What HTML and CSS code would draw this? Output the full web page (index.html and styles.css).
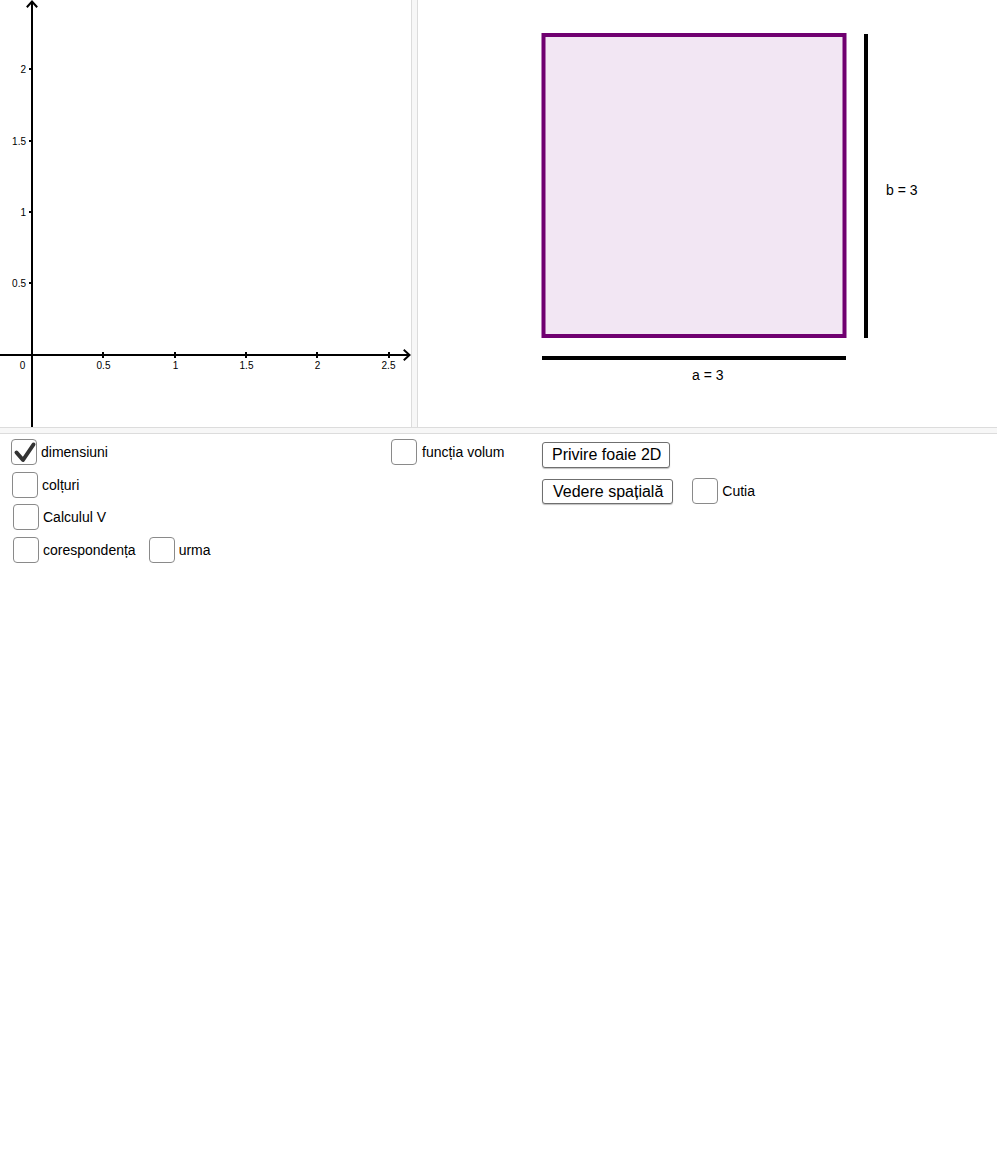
FILE: index.html
```html
<!DOCTYPE html>
<html lang="ro">
<head>
<meta charset="utf-8">
<title>Volum cutie</title>
<link rel="stylesheet" href="styles.css">
</head>
<body>
<div class="app">
  <div class="views">
    <div class="view-left">
      <svg class="canvas" width="411" height="427" viewBox="0 0 411 427">
        <g stroke="#000" stroke-width="2" fill="none">
          <line x1="32" y1="1" x2="32" y2="427"/>
          <polyline points="27.5,6.5 32,1.5 36.5,6.5" stroke-linecap="square"/>
          <line x1="0" y1="355" x2="409" y2="355"/>
          <polyline points="404.5,350.5 409.5,355 404.5,359.5" stroke-linecap="square"/>
          <line x1="29" y1="69" x2="32" y2="69"/>
          <line x1="29" y1="141" x2="32" y2="141"/>
          <line x1="29" y1="212" x2="32" y2="212"/>
          <line x1="29" y1="283" x2="32" y2="283"/>
          <line x1="103" y1="352" x2="103" y2="358"/>
          <line x1="175" y1="352" x2="175" y2="358"/>
          <line x1="246" y1="352" x2="246" y2="358"/>
          <line x1="317" y1="352" x2="317" y2="358"/>
          <line x1="389" y1="352" x2="389" y2="358"/>
        </g>
        <g class="ticklabel" text-anchor="end">
          <text x="26" y="72.5">2</text>
          <text x="26" y="144.5">1.5</text>
          <text x="26" y="215.5">1</text>
          <text x="26" y="286.5">0.5</text>
        </g>
        <g class="ticklabel" text-anchor="middle">
          <text x="22.5" y="368.5">0</text>
          <text x="103.5" y="368.5">0.5</text>
          <text x="175.5" y="368.5">1</text>
          <text x="246.5" y="368.5">1.5</text>
          <text x="317.5" y="368.5">2</text>
          <text x="388.5" y="368.5">2.5</text>
        </g>
      </svg>
    </div>
    <div class="vsplit"></div>
    <div class="view-right">
      <svg class="canvas" width="579" height="427" viewBox="0 0 579 427">
        <rect x="125.5" y="35" width="301" height="301" fill="#f2e6f3" stroke="#700070" stroke-width="4"/>
        <line x1="448" y1="34" x2="448" y2="338" stroke="#000" stroke-width="4"/>
        <line x1="124" y1="358" x2="428" y2="358" stroke="#000" stroke-width="4"/>
        <text class="seglabel" x="468" y="195">b = 3</text>
        <text class="seglabel" x="274" y="380">a = 3</text>
      </svg>
    </div>
  </div>
  <div class="hsplit"></div>
  <div class="controls">
    <div class="col-left">
      <label class="cb-row">
        <span class="box"><svg width="26" height="26" viewBox="0 0 26 26"><polyline points="5.5,13.5 12,21 22.5,5.5" fill="none" stroke="#333" stroke-width="4" stroke-linecap="round" stroke-linejoin="round"/></svg></span>
        <span class="lbl">dimensiuni</span>
      </label>
      <label class="cb-row indent-1">
        <span class="box"></span>
        <span class="lbl">colțuri</span>
      </label>
      <label class="cb-row indent-2">
        <span class="box"></span>
        <span class="lbl">Calculul V</span>
      </label>
      <div class="cb-line indent-2">
        <label class="cb-row">
          <span class="box"></span>
          <span class="lbl">corespondența</span>
        </label>
        <label class="cb-row">
          <span class="box"></span>
          <span class="lbl">urma</span>
        </label>
      </div>
    </div>
    <div class="col-mid">
      <label class="cb-row cb-wide">
        <span class="box"></span>
        <span class="lbl">funcția volum</span>
      </label>
    </div>
    <div class="col-right">
      <button class="btn" type="button">Privire foaie 2D</button>
      <div class="btn-line">
        <button class="btn btn-2" type="button">Vedere spațială</button>
        <label class="cb-row">
          <span class="box"></span>
          <span class="lbl">Cutia</span>
        </label>
      </div>
    </div>
  </div>
</div>
</body>
</html>
```
FILE: styles.css
```css
* { box-sizing: border-box; }

html, body {
  margin: 0;
  padding: 0;
  background: #fff;
}

body {
  font-family: "Liberation Sans", Arial, sans-serif;
  color: #000;
}

.app {
  width: 997px;
}

.views {
  display: flex;
  height: 427px;
}

.view-left {
  width: 411px;
  height: 427px;
  overflow: hidden;
}

.vsplit {
  width: 7px;
  height: 427px;
  background: #f7f7f7;
  border-left: 1px solid #dcdcdc;
  border-right: 1px solid #dcdcdc;
}

.view-right {
  flex: 1;
  height: 427px;
  overflow: hidden;
}

.canvas {
  display: block;
}

.ticklabel {
  font-family: "Liberation Sans", Arial, sans-serif;
  font-size: 10px;
  fill: #000;
}

.seglabel {
  font-family: "Liberation Sans", Arial, sans-serif;
  font-size: 14px;
  fill: #000;
}

.hsplit {
  height: 7px;
  background: #f7f7f7;
  border-top: 1px solid #dcdcdc;
  border-bottom: 1px solid #dcdcdc;
}

.controls {
  display: flex;
  align-items: flex-start;
  padding-top: 5px;
}

.col-left {
  width: 391px;
  padding-left: 11px;
  display: flex;
  flex-direction: column;
  gap: 6.5px;
}

.col-mid {
  width: 151px;
}

.col-right {
  padding-top: 3px;
  display: flex;
  flex-direction: column;
  align-items: flex-start;
  gap: 10px;
}

.cb-row {
  display: flex;
  align-items: center;
  gap: 4px;
  height: 26px;
  font-size: 14px;
}

.cb-wide {
  gap: 5px;
}

.cb-line {
  display: flex;
  align-items: center;
  gap: 13px;
}

.indent-1 { margin-left: 1px; }
.indent-2 { margin-left: 2px; }

.box {
  display: block;
  width: 26px;
  height: 26px;
  border: 1px solid #8a8a8a;
  border-radius: 4px;
  background: #fff;
  flex: none;
}

.box svg {
  display: block;
  margin: -1px;
}

.lbl {
  white-space: nowrap;
}

.btn-line {
  display: flex;
  align-items: center;
  gap: 19px;
}

.btn {
  font-family: "Liberation Sans", Arial, sans-serif;
  font-size: 16px;
  height: 26px;
  padding: 0 8px 0 9px;
  background: #fff;
  color: #000;
  border: 1px solid #6f6f6f;
  border-radius: 3px;
  box-shadow: 0 1px 1px rgba(0, 0, 0, 0.25);
  line-height: 24px;
}

.btn-2 {
  height: 25px;
  line-height: 23px;
  padding: 0 9px 0 10px;
}
```
